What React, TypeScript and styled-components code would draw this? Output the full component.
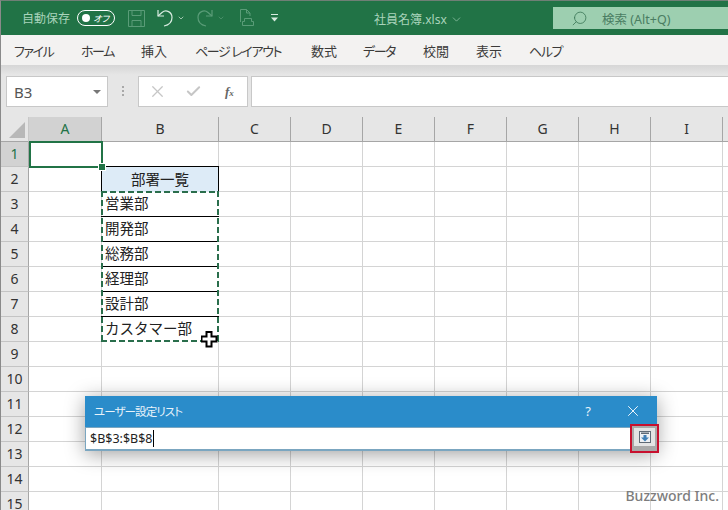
import styled, { createGlobalStyle } from "styled-components";
import { Check, ChevronDown, Search, X } from "lucide-react";

// the last column only shows its first pixels, so its header stays empty
const COLUMNS = ["A", "B", "C", "D", "E", "F", "G", "H", "I", ""];
const ROWS = Array.from({ length: 15 }, (_, i) => i + 1);
const MENU = [
  { label: "ファイル", width: 67, kana: true },
  { label: "ホーム", width: 60, kana: true },
  { label: "挿入", width: 54 },
  { label: "ページ レイアウト", width: 116, kana: true },
  { label: "数式", width: 52 },
  { label: "データ", width: 60, kana: true },
  { label: "校閲", width: 53 },
  { label: "表示", width: 53 },
  { label: "ヘルプ", width: 60, kana: true },
];
const DEPARTMENTS: Record<number, string> = {
  3: "営業部",
  4: "開発部",
  5: "総務部",
  6: "経理部",
  7: "設計部",
  8: "カスタマー部",
};
const UI_FONT = `"Noto Sans", "Noto Sans CJK JP", sans-serif`;

const GlobalStyle = createGlobalStyle`
  html, body {
    margin: 0;
    padding: 0;
    background: #fff;
  }
  * {
    box-sizing: border-box;
  }
`;

const ArrowBack = () => (
  <svg width="16" height="18" viewBox="0 0 16 18" fill="none" stroke="currentColor" strokeWidth="1.2">
    <path d="M1 1v6h6" />
    <path d="M1 7l4-3.500C9 0 15 3 15 8.500c0 4-3 7.500-8 8.500" />
  </svg>
);

const App = () => {
  return (
    <>
      <GlobalStyle />
      <Window>
        <TitleBar>
          <QuickAccess>
            <AutoSaveLabel>自動保存</AutoSaveLabel>
            <Toggle>
              <ToggleKnob />
              <ToggleText>オフ</ToggleText>
            </Toggle>
            <QuickIcon $gap={13} $dim>
              <svg width="17" height="17" viewBox="0 0 17 17" fill="none" stroke="currentColor">
                <path d="M.5.5h16v16H.5z" />
                <path d="M4 .5v5h9v-5M4 16.5v-6h9v6" />
              </svg>
            </QuickIcon>
            <QuickIcon $gap={12}>
              <ArrowBack />
            </QuickIcon>
            <SmallCaret $gap={4} />
            <QuickIcon $gap={12} $dim>
              <MirrorIcon>
                <ArrowBack />
              </MirrorIcon>
            </QuickIcon>
            <SmallCaret $gap={4} $dim />
            <QuickIcon $gap={14} $dim>
              <svg width="15" height="18" viewBox="0 0 15 18" fill="none" stroke="currentColor">
                <path d="M1.500 13V.5h6l3.500 3.500v3" />
                <path d="M7.500.5V4H11" />
                <path d="M5.500 9.500h7v3h2v4h-11v-4h2z" />
              </svg>
            </QuickIcon>
            <QuickIcon $gap={16}>
              <svg width="9" height="8" viewBox="0 0 9 8" fill="currentColor">
                <path d="M1 0h7v1H1zM1 3.500h7L4.500 7.500z" />
              </svg>
            </QuickIcon>
          </QuickAccess>
          <FileName>
            社員名簿.xlsx
            <ChevronDown size={13} strokeWidth={1.2} />
          </FileName>
          <SearchBox>
            <SearchGlyph size={17} strokeWidth={1.2} />
            <SearchText>検索 (Alt+Q)</SearchText>
          </SearchBox>
        </TitleBar>

        <MenuBar>
          {MENU.map((item) => (
            <MenuItem key={item.label} $width={item.width} $kana={item.kana}>
              {item.label}
            </MenuItem>
          ))}
        </MenuBar>

        <FormulaArea>
          <NameBox>
            B3
            <NameCaret />
          </NameBox>
          <Grip />
          <FormulaButtons>
            <X size={19} strokeWidth={1.6} />
            <Check size={17} strokeWidth={2.8} />
            <FxLabel>
              f<sub>x</sub>
            </FxLabel>
          </FormulaButtons>
          <FormulaInput />
        </FormulaArea>

        <Sheet>
          <Corner>
            <CornerMark />
          </Corner>
          {COLUMNS.map((col, index) => (
            <ColumnHeader key={index} $active={col === "A"}>
              {col}
            </ColumnHeader>
          ))}
          {ROWS.map((row) => (
            <Row key={row} row={row} />
          ))}

          <ActiveCell>
            <FillHandle />
          </ActiveCell>
          <Marquee />
          <CursorMark>
            <svg width="17" height="17" viewBox="0 0 17 17">
              <path
                d="M5.500 1h5v4.500h5v5h-5v5h-5v-5h-5v-5h5z"
                fill="#fff"
                stroke="#000"
                strokeWidth="2"
              />
            </svg>
          </CursorMark>

          <Dialog>
            <DialogTitle>
              <DialogName>ユーザー設定リスト</DialogName>
              <HelpMark>?</HelpMark>
              <X size={18} strokeWidth={1.2} color="#fff" />
            </DialogTitle>
            <DialogBody>
              <RangeInput>
                $B$3:$B$8
                <Caret />
              </RangeInput>
            </DialogBody>
            <CollapseButton>
              <CollapseFace>
                <svg width="12" height="12" viewBox="0 0 12 12">
                  <rect x=".5" y=".5" width="11" height="11" fill="#eef1f4" stroke="#5f6a75" />
                  <path d="M2 1.500h8v1.500H2z" fill="#5f6a75" />
                  <path d="M4.500 4h3v2.500H10L6 10.500 2 6.500h2.500z" fill="#3f7fb5" />
                </svg>
              </CollapseFace>
            </CollapseButton>
          </Dialog>

          <Watermark>Buzzword Inc.</Watermark>
        </Sheet>
      </Window>
    </>
  );
};
export default App;

const Row = ({ row }: { row: number }) => {
  const department = DEPARTMENTS[row];
  return (
    <>
      <RowHeader $active={row === 1}>{row}</RowHeader>
      {COLUMNS.map((col, index) => {
        if (col === "B" && row === 2) {
          return <TableHead key={index}>部署一覧</TableHead>;
        }
        if (col === "B" && department) {
          return (
            <TableCell key={index} $last={row === 8}>
              {department}
            </TableCell>
          );
        }
        return <Cell key={index} />;
      })}
    </>
  );
};

const Window = styled.div`
  position: relative;
  width: 728px;
  height: 510px;
  overflow: hidden;
  display: flex;
  flex-direction: column;
  background: #e6e6e6;
  border-left: 1px solid #8a8a8a;
  border-top: 1px solid #6f7f76;
  font-family: ${UI_FONT};
`;
const TitleBar = styled.header`
  height: 34px;
  flex: none;
  display: flex;
  align-items: flex-start;
  background: #217346;
  color: #a9d3bb;
`;
const QuickAccess = styled.div`
  width: 373px;
  height: 34px;
  flex: none;
  display: flex;
  align-items: center;
  padding-left: 21px;
`;
const AutoSaveLabel = styled.span`
  font-size: 12px;
  color: #a9d3bb;
  white-space: nowrap;
`;
const Toggle = styled.div`
  width: 38px;
  height: 16px;
  margin-left: 7px;
  flex: none;
  display: flex;
  align-items: center;
  justify-content: space-between;
  padding: 0 5px 0 4px;
  border: 1px solid #fff;
  border-radius: 8px;
`;
const ToggleKnob = styled.span`
  width: 8px;
  height: 8px;
  border-radius: 50%;
  background: #fff;
`;
const ToggleText = styled.span`
  font-size: 9px;
  font-style: italic;
  line-height: 1;
  color: #fff;
  font-feature-settings: "palt";
`;
const QuickIcon = styled.span<{ $gap: number; $dim?: boolean }>`
  display: flex;
  flex: none;
  margin-left: ${(props) => props.$gap}px;
  color: ${(props) => (props.$dim ? "#5a9c78" : "#d8ebe0")};
`;
const MirrorIcon = styled.span`
  display: flex;
  transform: scaleX(-1);
`;
const SmallCaret = styled(ChevronDown).attrs({ size: 8, strokeWidth: 2 })<{
  $gap: number;
  $dim?: boolean;
}>`
  flex: none;
  margin-left: ${(props) => props.$gap}px;
  color: ${(props) => (props.$dim ? "#5a9c78" : "#d8ebe0")};
`;
const FileName = styled.div`
  width: 179px;
  height: 34px;
  flex: none;
  display: flex;
  align-items: center;
  gap: 3px;
  font-size: 12px;
  color: #a9d3bb;
  padding-top: 2px;
`;
const SearchBox = styled.div`
  width: 175px;
  height: 22px;
  margin-top: 6px;
  flex: none;
  display: flex;
  align-items: center;
  padding-left: 18px;
  background: #9dcfb0;
  color: #3f7a5a;
`;
const SearchGlyph = styled(Search)`
  transform: scaleX(-1);
`;
const SearchText = styled.span`
  margin-left: 14px;
  font-size: 12.500px;
  color: #4a7d62;
  white-space: nowrap;
`;
const MenuBar = styled.nav`
  height: 30px;
  flex: none;
  display: flex;
  align-items: center;
  padding-left: 13px;
  background: #f3f2f1;
`;
const MenuItem = styled.span<{ $width: number; $kana?: boolean }>`
  width: ${(props) => props.$width}px;
  flex: none;
  font-size: 13px;
  color: #3b3a39;
  white-space: pre;
  font-feature-settings: "palt";
  letter-spacing: ${(props) => (props.$kana ? "-1.400px" : "0")};
`;
const FormulaArea = styled.div`
  height: 52px;
  flex: none;
  display: flex;
  align-items: flex-start;
  padding: 11px 0 0 5px;
  background: linear-gradient(#d6d6d6, #e6e6e6 10px);
`;
const NameBox = styled.div`
  width: 102px;
  height: 31px;
  flex: none;
  display: flex;
  align-items: center;
  justify-content: space-between;
  padding: 0 6px 0 7px;
  background: #fff;
  border: 1px solid #c8c8c8;
  font-size: 15px;
  color: #555;
`;
const NameCaret = styled.span`
  width: 0;
  height: 0;
  border-left: 4px solid transparent;
  border-right: 4px solid transparent;
  border-top: 4px solid #777;
`;
const Grip = styled.span`
  width: 2px;
  height: 10px;
  flex: none;
  margin: 10px 14px 0 14px;
  background: repeating-linear-gradient(#a8a8a8 0 2px, transparent 2px 4px);
`;
const FormulaButtons = styled.div`
  width: 110px;
  height: 31px;
  flex: none;
  display: grid;
  grid-template-columns: 37px 40px auto;
  align-items: center;
  padding-left: 9px;
  background: #fff;
  border: 1px solid #c8c8c8;
  color: #c6c6c6;
`;
const FxLabel = styled.span`
  font-family: "Liberation Serif", serif;
  font-size: 13px;
  font-weight: bold;
  font-style: italic;
  color: #666;
  sub {
    font-size: 9px;
    vertical-align: baseline;
  }
`;
const FormulaInput = styled.div`
  height: 31px;
  flex: 1;
  margin-left: 3px;
  background: #fff;
  border: 1px solid #c8c8c8;
  border-right: none;
`;
const Sheet = styled.main`
  position: relative;
  flex: 1;
  display: grid;
  grid-template-columns: 28px 73px 117px 72px 72px 72px 72px 72px 72px 72px 72px;
  grid-template-rows: 25px repeat(15, 25px);
  background: #fff;
  overflow: hidden;
`;
const Corner = styled.div`
  position: relative;
  background: #e6e6e6;
  border-bottom: 1px solid #a6a6a6;
  border-right: 1px solid #c8c8c8;
`;
const CornerMark = styled.span`
  position: absolute;
  right: 3px;
  bottom: 3px;
  width: 0;
  height: 0;
  border-left: 16px solid transparent;
  border-bottom: 16px solid #b8b8b8;
`;
const ColumnHeader = styled.div<{ $active?: boolean }>`
  display: flex;
  align-items: center;
  justify-content: center;
  padding-bottom: 2px;
  font-size: 14px;
  background: ${(props) => (props.$active ? "#d2d2d2" : "#e6e6e6")};
  color: ${(props) => (props.$active ? "#217346" : "#333")};
  border-right: 1px solid #a6a6a6;
  border-bottom: 1px solid #a6a6a6;
`;
const RowHeader = styled.div<{ $active?: boolean }>`
  display: flex;
  align-items: center;
  justify-content: center;
  padding-bottom: 2px;
  font-size: 14px;
  background: ${(props) => (props.$active ? "#d2d2d2" : "#e6e6e6")};
  color: ${(props) => (props.$active ? "#217346" : "#333")};
  border-right: 1px solid #a6a6a6;
  border-bottom: 1px solid #c4c4c4;
`;
const Cell = styled.div`
  border-right: 1px solid #d4d4d4;
  border-bottom: 1px solid #d4d4d4;
`;
const TableCell = styled.div<{ $last?: boolean }>`
  display: flex;
  align-items: center;
  padding: 0 0 3px 4px;
  margin-left: -1px;
  font-family: "Noto Sans CJK JP", sans-serif;
  font-size: 14.500px;
  color: #222;
  white-space: nowrap;
  border-bottom: 1px solid ${(props) => (props.$last ? "transparent" : "#000")};
`;
const TableHead = styled(TableCell)`
  justify-content: center;
  padding: 0 0 3px;
  margin-top: -1px;
  background: #ddebf7;
  border: 1px solid #000;
  border-bottom: none;
`;
const ActiveCell = styled.div`
  position: absolute;
  left: 28px;
  top: 24px;
  width: 74px;
  height: 27px;
  border: 2px solid #217346;
`;
const FillHandle = styled.span`
  position: absolute;
  right: -4px;
  bottom: -4px;
  width: 6px;
  height: 6px;
  background: #217346;
  outline: 1px solid #fff;
`;
const Marquee = styled.div`
  position: absolute;
  left: 100px;
  top: 74px;
  width: 118px;
  height: 151px;
  background-image: linear-gradient(90deg, #2a6e4c 6px, transparent 6px),
    linear-gradient(90deg, #2a6e4c 6px, transparent 6px),
    linear-gradient(#2a6e4c 6px, transparent 6px),
    linear-gradient(#2a6e4c 6px, transparent 6px);
  background-size: 9px 2px, 9px 2px, 2px 9px, 2px 9px;
  background-position: 0 0, 0 100%, 0 0, 100% 0;
  background-repeat: repeat-x, repeat-x, repeat-y, repeat-y;
`;
const CursorMark = styled.div`
  position: absolute;
  left: 200px;
  top: 214px;
  display: flex;
`;
const Dialog = styled.section`
  position: absolute;
  left: 84px;
  top: 279px;
  width: 572px;
  height: 55px;
  display: flex;
  flex-direction: column;
  background: #2b8ccb;
  box-shadow: 0 3px 20px rgba(0, 0, 0, 0.38);
`;
const DialogTitle = styled.div`
  height: 31px;
  flex: none;
  display: flex;
  align-items: center;
  padding: 0 15px 2px 9px;
  color: #fff;
  background: #2a8cca;
`;
const DialogName = styled.span`
  flex: 1;
  font-size: 11.500px;
  color: #e8f3fa;
  font-feature-settings: "palt";
  letter-spacing: -0.900px;
`;
const HelpMark = styled.span`
  margin-right: 33px;
  font-size: 13px;
  color: #e8f3fa;
`;
const DialogBody = styled.div`
  flex: 1;
  display: flex;
  padding: 1px 1px 2px 1px;
  background: #7ba6c0;
`;
const RangeInput = styled.div`
  flex: 1;
  display: flex;
  align-items: center;
  padding-left: 4px;
  background: #fff;
  font-size: 12.500px;
  color: #222;
`;
const Caret = styled.span`
  width: 1px;
  height: 17px;
  background: #000;
`;
const CollapseButton = styled.div`
  position: absolute;
  right: -2px;
  top: 28px;
  width: 29px;
  height: 29px;
  padding: 2px;
  border: 2px solid #c8102e;
  background: #a9a9a9;
`;
const CollapseFace = styled.div`
  height: 18px;
  display: flex;
  align-items: center;
  justify-content: center;
  background: #e4e4e4;
`;
const Watermark = styled.div`
  position: absolute;
  right: 9px;
  bottom: 5px;
  font-family: ${UI_FONT};
  font-size: 14px;
  font-weight: 500;
  color: #7d7d7d;
`;
